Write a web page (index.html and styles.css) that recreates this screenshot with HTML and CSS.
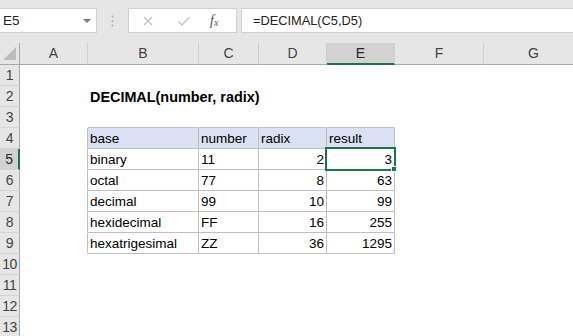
FILE: index.html
```html
<!DOCTYPE html>
<html>
<head>
<meta charset="utf-8">
<link rel="stylesheet" href="styles.css">
</head>
<body>
<div class="toolbar">
  <div class="namebox"><span class="ref">E5</span>
    <svg class="caret" width="8" height="5" viewBox="0 0 8 5"><path d="M0 0h8L4 4z" fill="#7a7a7a"/></svg>
  </div>
  <div class="grip">
    <svg width="3" height="12" viewBox="0 0 3 12"><circle cx="1.5" cy="1.5" r="1" fill="#b0b0b0"/><circle cx="1.5" cy="6" r="1" fill="#b0b0b0"/><circle cx="1.5" cy="10.5" r="1" fill="#b0b0b0"/></svg>
  </div>
  <div class="iconbox">
    <svg class="ico" width="12" height="12" viewBox="0 0 12 12"><path d="M2 2l8 8M10 2l-8 8" stroke="#c4c4c4" stroke-width="1.4" fill="none"/></svg>
    <svg class="ico" width="14" height="12" viewBox="0 0 14 12"><path d="M1.5 6.5l3.5 3.5 7.5-8" stroke="#c4c4c4" stroke-width="1.4" fill="none"/></svg>
    <span class="fx">f<sub>x</sub></span>
  </div>
  <div class="formula">=DECIMAL(C5,D5)</div>
</div>
<div class="sheet">
  <div class="ch corner"><svg width="13" height="13" viewBox="0 0 13 13"><path d="M13 0V13H0z" fill="#bdbdbd"/></svg></div>
  <div class="ch">A</div><div class="ch">B</div><div class="ch">C</div><div class="ch">D</div><div class="ch ch-sel">E</div><div class="ch">F</div><div class="ch">G</div>

  <div class="rh">1</div><div class="c"></div><div class="c"></div><div class="c"></div><div class="c"></div><div class="c"></div><div class="c"></div><div class="c"></div>
  <div class="rh">2</div><div class="c"></div><div class="c title">DECIMAL(number, radix)</div><div class="c"></div><div class="c"></div><div class="c"></div><div class="c"></div><div class="c"></div>
  <div class="rh">3</div><div class="c"></div><div class="c above"></div><div class="c above"></div><div class="c above"></div><div class="c above"></div><div class="c"></div><div class="c"></div>

  <div class="rh">4</div><div class="c left"></div><div class="c t th">base</div><div class="c t th">number</div><div class="c t th">radix</div><div class="c t th">result</div><div class="c"></div><div class="c"></div>
  <div class="rh rh-sel">5</div><div class="c left"></div><div class="c t">binary</div><div class="c t">11</div><div class="c t r">2</div><div class="c t r sel-cell">3<div class="sel"></div><div class="handle"></div></div><div class="c"></div><div class="c"></div>
  <div class="rh">6</div><div class="c left"></div><div class="c t">octal</div><div class="c t">77</div><div class="c t r">8</div><div class="c t r">63</div><div class="c"></div><div class="c"></div>
  <div class="rh">7</div><div class="c left"></div><div class="c t">decimal</div><div class="c t">99</div><div class="c t r">10</div><div class="c t r">99</div><div class="c"></div><div class="c"></div>
  <div class="rh">8</div><div class="c left"></div><div class="c t">hexidecimal</div><div class="c t">FF</div><div class="c t r">16</div><div class="c t r">255</div><div class="c"></div><div class="c"></div>
  <div class="rh">9</div><div class="c left"></div><div class="c t">hexatrigesimal</div><div class="c t">ZZ</div><div class="c t r">36</div><div class="c t r">1295</div><div class="c"></div><div class="c"></div>

  <div class="rh">10</div><div class="c"></div><div class="c"></div><div class="c"></div><div class="c"></div><div class="c"></div><div class="c"></div><div class="c"></div>
  <div class="rh">11</div><div class="c"></div><div class="c"></div><div class="c"></div><div class="c"></div><div class="c"></div><div class="c"></div><div class="c"></div>
  <div class="rh">12</div><div class="c"></div><div class="c"></div><div class="c"></div><div class="c"></div><div class="c"></div><div class="c"></div><div class="c"></div>
  <div class="rh">13</div><div class="c"></div><div class="c"></div><div class="c"></div><div class="c"></div><div class="c"></div><div class="c"></div><div class="c"></div>
</div>
</body>
</html>
```
FILE: styles.css
```css
* { box-sizing: border-box; }
html, body { margin: 0; padding: 0; background: #fff; overflow: hidden; }
body { width: 573px; height: 336px; font-family: "Liberation Sans", Arial, sans-serif; }

.toolbar {
  height: 43px;
  background: #e6e6e6;
  display: flex;
  align-items: flex-start;
  padding-top: 8px;
}
.namebox {
  width: 97px;
  height: 25px;
  background: #fff;
  border: 1px solid #d0d0d0;
  border-left: none;
  display: flex;
  align-items: center;
  justify-content: space-between;
  padding: 0 5px 0 3px;
  font-size: 13.5px;
  color: #222;
}
.caret { margin-top: 1px; }
.grip {
  width: 31px;
  height: 25px;
  display: flex;
  align-items: center;
  justify-content: center;
}
.iconbox {
  width: 109px;
  height: 25px;
  background: #fff;
  border: 1px solid #d0d0d0;
  display: flex;
  align-items: center;
  padding-left: 13px;
  gap: 23px;
}
.fx {
  font-family: "Liberation Serif", serif;
  font-style: italic;
  font-size: 14px;
  color: #555;
  margin-left: -4px;
}
.fx sub { font-size: 10px; vertical-align: -1px; }
.formula {
  flex: 1;
  margin-left: 4px;
  height: 25px;
  background: #fff;
  border: 1px solid #d0d0d0;
  border-right: none;
  padding-left: 11px;
  font-size: 12.8px;
  line-height: 23px;
  color: #222;
}

.sheet {
  display: grid;
  grid-template-columns: 20px 68px 111px 60px 68px 68px 89px 100px;
  grid-template-rows: 22px repeat(13, 21px);
}
.ch {
  background: #e6e6e6;
  border-bottom: 1px solid #a9a9a9;
  border-right: 1px solid #cfcfcf;
  font-size: 14px;
  color: #444;
  text-align: center;
  line-height: 21px;
}
.corner {
  border-right: 1px solid #a9a9a9;
  display: flex;
  align-items: flex-end;
  justify-content: flex-end;
  padding: 0 3px 4px 0;
}
.ch-sel {
  background: #d2d2d2;
  border-bottom: 2px solid #217346;
  color: #262626;
}
.rh {
  background: #e6e6e6;
  border-right: 1px solid #a9a9a9;
  border-bottom: 1px solid #d4d4d4;
  font-size: 14px;
  color: #444;
  text-align: center;
  line-height: 21px;
  white-space: nowrap;
  overflow: visible;
  letter-spacing: -0.5px;
}
.rh-sel {
  background: #d2d2d2;
  border-right: 2px solid #217346;
  color: #262626;
}
.c {
  border-right: 1px solid transparent;
  border-bottom: 1px solid transparent;
  font-size: 13.5px;
  line-height: 20px;
  padding: 1px 2px 0 2px;
  color: #000;
  white-space: nowrap;
}
.title { font-weight: bold; font-size: 14.4px; overflow: visible; }
.above { border-bottom-color: #bfbfbf; }
.left { border-right-color: #bfbfbf; }
.t { border-right-color: #bfbfbf; border-bottom-color: #bfbfbf; }
.th { background: #d9e1f2; }
.r { text-align: right; }
.sel-cell { position: relative; }
.sel {
  position: absolute;
  left: -2px;
  top: -2px;
  width: 71px;
  height: 24px;
  border: 2px solid #217346;
}
.handle {
  position: absolute;
  left: 64px;
  top: 17px;
  width: 6px;
  height: 6px;
  background: #217346;
  border: 1px solid #fff;
}
```
